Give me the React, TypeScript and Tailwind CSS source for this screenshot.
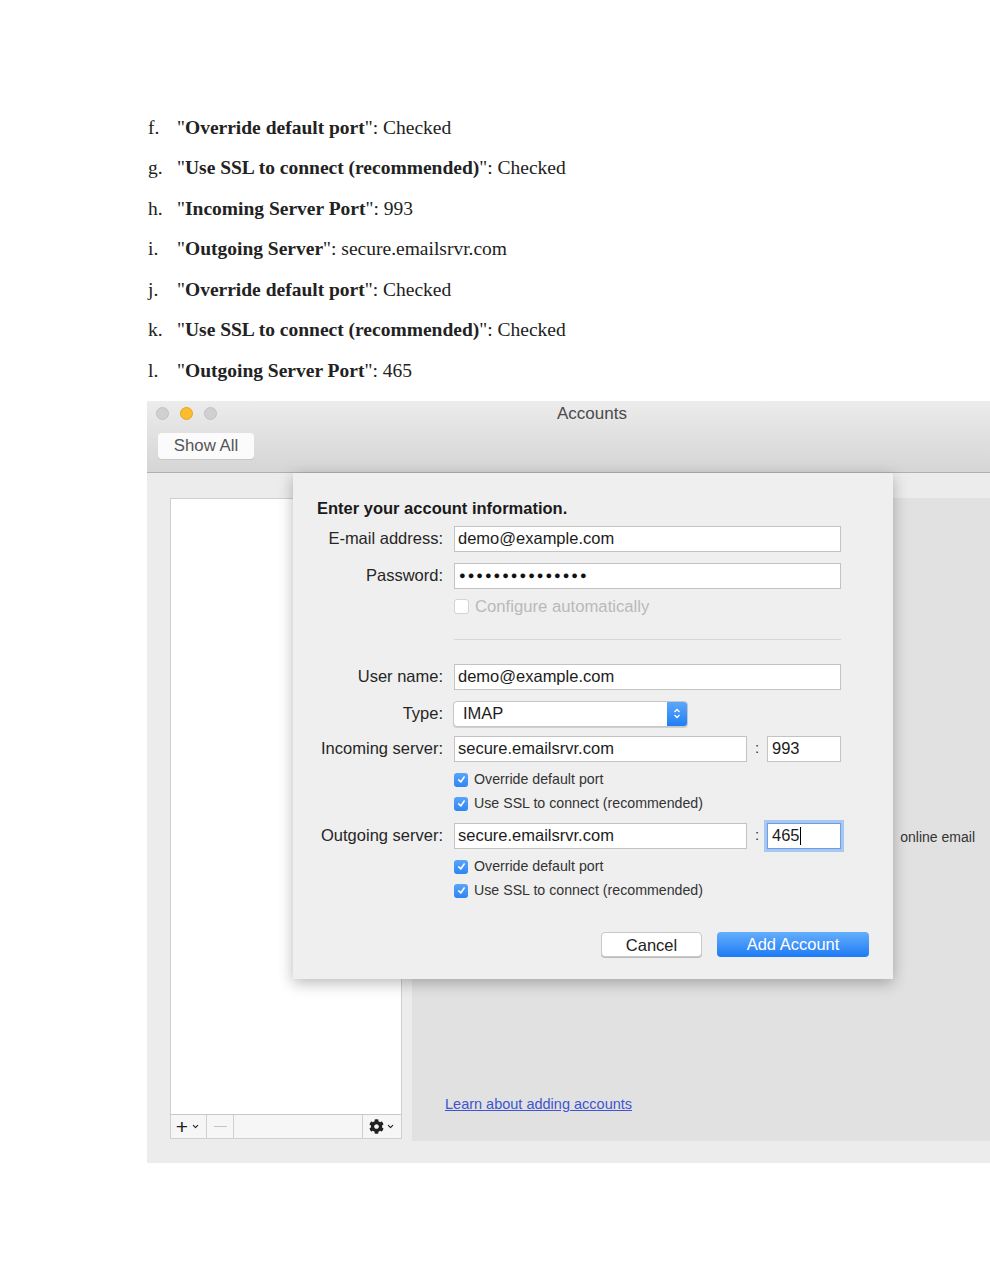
import React from "react";
import { FaCog } from "react-icons/fa";
import { HiChevronDown } from "react-icons/hi";

const items: { letter: string; bold: string; value: string }[] = [
  { letter: "f.", bold: "Override default port", value: "Checked" },
  { letter: "g.", bold: "Use SSL to connect (recommended)", value: "Checked" },
  { letter: "h.", bold: "Incoming Server Port", value: "993" },
  { letter: "i.", bold: "Outgoing Server", value: "secure.emailsrvr.com" },
  { letter: "j.", bold: "Override default port", value: "Checked" },
  { letter: "k.", bold: "Use SSL to connect (recommended)", value: "Checked" },
  { letter: "l.", bold: "Outgoing Server Port", value: "465" },
];

const sans = "font-['Liberation_Sans','Helvetica_Neue',Arial,sans-serif]";

const Field = ({ label, value, className = "" }: { label: string; value: string; className?: string }) => (
  <div className={`flex items-center h-[26px] ${className}`}>
    <div className="w-[151px] text-right text-[16.5px] text-[#262626] pr-[1px]">{label}</div>
    <div className="ml-[10px] w-[387px] h-[26px] bg-white border border-[#c3c3c3] flex items-center px-[3px] text-[16.5px] text-[#1c1c1c]">
      {value}
    </div>
  </div>
);

const BlueCheck = ({ text, className = "" }: { text: string; className?: string }) => (
  <div className={`flex items-center h-[20px] pl-[161px] ${className}`}>
    <div className="w-[14px] h-[14px] rounded-[3px] bg-gradient-to-b from-[#5aa4fa] to-[#2d85f2] flex items-center justify-center">
      <svg width="9" height="9" viewBox="0 0 10 10">
        <path d="M2 5.4 L4.2 7.8 L8 2.2" stroke="white" strokeWidth="1.7" fill="none" strokeLinecap="round" strokeLinejoin="round" />
      </svg>
    </div>
    <span className="ml-[6px] text-[14.2px] text-[#333]">{text}</span>
  </div>
);

const ServerRow = ({
  label,
  value,
  port,
  focused = false,
  className = "",
}: {
  label: string;
  value: string;
  port: string;
  focused?: boolean;
  className?: string;
}) => (
  <div className={`flex items-center h-[26px] ${className}`}>
    <div className="w-[151px] text-right text-[16.5px] text-[#262626] pr-[1px]">{label}</div>
    <div className="ml-[10px] w-[293px] h-[26px] bg-white border border-[#c3c3c3] flex items-center px-[3px] text-[16.5px] text-[#1c1c1c]">
      {value}
    </div>
    <span className="w-[20px] text-center text-[15px] text-[#333]">:</span>
    <div
      className={`w-[74px] h-[26px] bg-white flex items-center px-[4px] text-[16.5px] text-[#1c1c1c] ${
        focused ? "border border-[#6a9fe6] ring-[3px] ring-[#a6c8f3]" : "border border-[#c3c3c3]"
      }`}
    >
      {port}
      {focused && <span className="inline-block w-[1px] h-[18px] bg-black" />}
    </div>
  </div>
);

export default function App() {
  return (
    <div className="w-[990px] h-[1280px] bg-white overflow-hidden">
      <div className="pt-[107px] pl-[148px] font-['Liberation_Serif','Times_New_Roman',serif] text-[19.5px] text-[#222]">
        {items.map((it) => (
          <div key={it.letter} className="flex h-[40.5px] items-center">
            <span className="w-[29px]">{it.letter}</span>
            <span>
              "<b>{it.bold}</b>": {it.value}
            </span>
          </div>
        ))}
      </div>

      <div className={`relative mt-[10px] ml-[147px] w-[843px] h-[762px] bg-[#ececec] ${sans}`}>
        {/* title bar */}
        <div className="h-[72px] bg-gradient-to-b from-[#ececec] to-[#d5d5d5] border-b border-[#b0b0b0] pt-[6px] pl-[9px]">
          <div className="flex items-center h-[14px]">
            <span className="w-[13px] h-[13px] rounded-full bg-[#d0d0d0] border border-[#c2c2c2]" />
            <span className="ml-[11px] w-[13px] h-[13px] rounded-full bg-[#fbbd2e] border border-[#e4a522]" />
            <span className="ml-[11px] w-[13px] h-[13px] rounded-full bg-[#d0d0d0] border border-[#c2c2c2]" />
            <span className="ml-[340px] text-[17px] text-[#4a4a4a]">Accounts</span>
          </div>
          <button className="mt-[12px] ml-[2px] w-[96px] h-[26px] rounded-[4px] bg-[#fbfbfb] shadow-[0_1px_0_#c6c6c6] text-[16.8px] text-[#555]">
            Show All
          </button>
        </div>

        {/* body */}
        <div className="flex pt-[25px] h-[668px]">
          <div className="ml-[23px] w-[232px] h-[641px] bg-white border border-[#cfcfcf] flex flex-col">
            <div className="flex-1" />
            <div className="h-[24px] border-t border-[#c8c8c8] bg-[#f6f6f6] flex">
              <div className="w-[36px] border-r border-[#cfcfcf] flex items-center justify-center gap-[2px] text-[#222]">
                <span className="text-[21px] leading-none font-light">+</span>
                <HiChevronDown size={11} />
              </div>
              <div className="w-[27px] border-r border-[#cfcfcf] flex items-center justify-center">
                <span className="w-[13px] h-[1px] bg-[#c4c4c4]" />
              </div>
              <div className="flex-1 border-r border-[#cfcfcf]" />
              <div className="w-[38px] flex items-center justify-center gap-[1px] text-[#222]">
                <FaCog size={15} />
                <HiChevronDown size={11} />
              </div>
            </div>
          </div>
          <div className="ml-[10px] flex-1 h-[643px] bg-[#e1e1e1] flex flex-col">
            <div className="mt-[329px] pr-[15px] flex justify-end">
              <span className="text-[14px] text-[#333] whitespace-nowrap">online email</span>
            </div>
            <div className="mt-[246px] ml-[33px] text-[14.5px] text-[#3d55cf] underline">
              Learn about adding accounts
            </div>
          </div>
        </div>

        {/* sheet */}
        <div className="absolute left-[146px] top-[72px] w-[600px] h-[506px] bg-[#efefef] shadow-[0_4px_14px_rgba(0,0,0,0.28)] flex flex-col">
          <div className="mt-[26px] ml-[24px] h-[20px] flex items-center text-[16.5px] font-bold text-[#1a1a1a]">
            Enter your account information.
          </div>
          <Field label="E-mail address:" value="demo@example.com" className="mt-[7px]" />
          <div className="flex items-center h-[26px] mt-[11px]">
            <div className="w-[151px] text-right text-[16.5px] text-[#262626] pr-[1px]">Password:</div>
            <div className="ml-[10px] w-[387px] h-[26px] bg-white border border-[#c3c3c3] flex items-center px-[4px] text-[11px] tracking-[2px] text-[#111]">
              ●●●●●●●●●●●●●●●
            </div>
          </div>
          <div className="flex items-center h-[20px] pl-[161px] mt-[8px]">
            <div className="w-[15px] h-[15px] rounded-[3px] bg-white border border-[#d4d4d4]" />
            <span className="ml-[6px] text-[16.7px] text-[#b9b9b9]">Configure automatically</span>
          </div>
          <div className="mt-[22px] ml-[161px] w-[387px] h-[1px] bg-[#d6d6d6]" />
          <Field label="User name:" value="demo@example.com" className="mt-[24px]" />
          <div className="flex items-center h-[26px] mt-[11px]">
            <div className="w-[151px] text-right text-[16.5px] text-[#262626] pr-[1px]">Type:</div>
            <div className="ml-[9px] w-[235px] h-[26px] bg-white border border-[#c6c6c6] rounded-[4px] flex items-center overflow-hidden shadow-[0_1px_0_#d0d0d0]">
              <span className="flex-1 pl-[9px] text-[16.5px] text-[#1c1c1c]">IMAP</span>
              <div className="w-[20px] h-full bg-gradient-to-b from-[#5ba6fb] to-[#1e7ff3] flex items-center justify-center">
                <svg width="8" height="13" viewBox="0 0 8 13">
                  <path d="M1.5 5 L4 2.5 L6.5 5 M1.5 8 L4 10.5 L6.5 8" stroke="white" strokeWidth="1.3" fill="none" />
                </svg>
              </div>
            </div>
          </div>
          <ServerRow label="Incoming server:" value="secure.emailsrvr.com" port="993" className="mt-[9px]" />
          <BlueCheck text="Override default port" className="mt-[8px]" />
          <BlueCheck text="Use SSL to connect (recommended)" className="mt-[4px]" />
          <ServerRow label="Outgoing server:" value="secure.emailsrvr.com" port="465" focused className="mt-[9px]" />
          <BlueCheck text="Override default port" className="mt-[8px]" />
          <BlueCheck text="Use SSL to connect (recommended)" className="mt-[4px]" />
          <div className="mt-[31px] flex justify-end pr-[24px] gap-[15px]">
            <button className="w-[101px] h-[25px] rounded-[4px] bg-white border border-[#c9c9c9] shadow-[0_1px_0_#bcbcbc] text-[16.5px] text-[#222]">
              Cancel
            </button>
            <button className="w-[152px] h-[25px] rounded-[4px] bg-gradient-to-b from-[#63aefc] to-[#1a7af4] text-[16.5px] text-white">
              Add Account
            </button>
          </div>
        </div>
      </div>
    </div>
  );
}
